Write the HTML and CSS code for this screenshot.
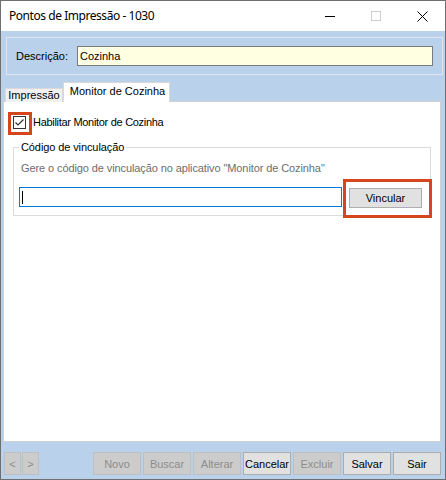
FILE: index.html
```html
<!DOCTYPE html>
<html lang="pt-BR">
<head>
<meta charset="utf-8">
<title>Pontos de Impressão - 1030</title>
<link rel="stylesheet" href="styles.css">
</head>
<body>
<div class="window">
  <div class="titlebar">
    <span class="title">Pontos de Impressão - 1030</span>
    <div class="caption">
      <span class="cap"><svg width="10" height="10" viewBox="0 0 10 10"><path d="M0 5.5H10" stroke="#000" stroke-width="1"/></svg></span>
      <span class="cap"><svg width="10" height="10" viewBox="0 0 10 10"><rect x="0.5" y="0.5" width="9" height="9" fill="none" stroke="#cccccc" stroke-width="1"/></svg></span>
      <span class="cap"><svg width="11" height="11" viewBox="0 0 11 11"><path d="M0.5 0.5L10.5 10.5M10.5 0.5L0.5 10.5" stroke="#000" stroke-width="1"/></svg></span>
    </div>
  </div>
  <div class="client">
    <div class="header-panel">
      <span class="lbl">Descrição:</span>
      <div class="desc-input">Cozinha</div>
    </div>
    <div class="tabs">
      <div class="tab">Impressão</div>
      <div class="tab active">Monitor de Cozinha</div>
    </div>
    <div class="tab-page">
      <div class="check-row">
        <span class="checkbox"><svg width="11" height="11" viewBox="0 0 11 11"><path d="M1.5 5.5L4 8L9.5 2.5" fill="none" stroke="#333" stroke-width="1.2"/></svg><span class="mark mark-check"></span></span>
        <span class="check-label">Habilitar Monitor de Cozinha</span>
      </div>
      <fieldset class="group">
        <legend>Código de vinculação</legend>
        <div class="hint">Gere o código de vinculação no aplicativo "Monitor de Cozinha"</div>
        <div class="link-row">
          <div class="code-input"><span class="caret"></span></div>
          <button class="btn link-btn">Vincular</button>
          <span class="mark mark-btn"></span>
        </div>
      </fieldset>
    </div>
    <div class="toolbar">
      <div class="nav">
        <button class="btn nav-btn" disabled>&lt;</button>
        <button class="btn nav-btn" disabled>&gt;</button>
      </div>
      <div class="actions">
        <button class="btn act" disabled>Novo</button>
        <button class="btn act" disabled>Buscar</button>
        <button class="btn act" disabled>Alterar</button>
        <button class="btn act">Cancelar</button>
        <button class="btn act" disabled>Excluir</button>
        <button class="btn act">Salvar</button>
        <button class="btn act">Sair</button>
      </div>
    </div>
  </div>
</div>
</body>
</html>
```

FILE: styles.css
```css
* { box-sizing: border-box; }
html, body { margin: 0; padding: 0; }
body {
  width: 446px;
  height: 480px;
  font-family: "Liberation Sans", Arial, sans-serif;
  font-size: 11px;
  color: #000;
  background: #fff;
}
.window {
  width: 446px;
  height: 480px;
  border: 1px solid #6f6f6f;
  display: flex;
  flex-direction: column;
}
.titlebar {
  height: 30px;
  flex: none;
  background: #fff;
  display: flex;
  align-items: center;
  justify-content: space-between;
}
.title {
  padding-left: 8px;
  font-family: "Noto Sans", "Liberation Sans", sans-serif;
  font-size: 12px;
  letter-spacing: -0.45px;
  line-height: 16px;
  margin-top: -1px;
}
.caption { display: flex; height: 30px; }
.cap {
  width: 46px;
  height: 30px;
  display: flex;
  align-items: center;
  justify-content: center;
}
.client {
  flex: 1;
  background: #b9d1ea;
  display: flex;
  flex-direction: column;
}
.header-panel {
  margin: 6px 2px 0 5px;
  height: 38px;
  border: 1px solid #dfe6ef;
  display: flex;
  align-items: center;
  padding: 0 9px 0 9px;
}
.lbl { width: 61px; line-height: 13px; }
.desc-input {
  flex: 1;
  height: 20px;
  background: #ffffe1;
  border: 1px solid #7a7a7a;
  padding-left: 2px;
  line-height: 18px;
}
.tabs {
  margin: 7px 0 0 4px;
  height: 19px;
  display: flex;
  align-items: flex-end;
  position: relative;
  z-index: 1;
}
.tab {
  height: 14px;
  width: 58px;
  background: #f0f0f0;
  border: 1px solid #d9d9d9;
  border-bottom: none;
  text-align: center;
  line-height: 13px;
  margin-bottom: -1px;
}
.tab.active {
  width: 107px;
  height: 20px;
  background: #fff;
  line-height: 16px;
  padding-left: 2px;
}
.tab-page {
  margin-left: 2px;
  width: 438px;
  height: 341px;
  background: #fff;
  border: 1px solid #d0d0d0;
  padding: 14px 0 0 9px;
}
.check-row {
  display: flex;
  align-items: center;
  height: 13px;
}
.checkbox {
  position: relative;
  width: 13px;
  height: 13px;
  border: 1px solid #333;
  background: #fff;
  display: flex;
}
.check-label { margin-left: 7px; line-height: 13px; letter-spacing: -0.3px; }
.mark {
  position: absolute;
  border: 3px solid #d5461c;
}
.mark-check { left: -6px; top: -5px; width: 24px; height: 23px; }
.group {
  margin: 12px 0 0 0;
  width: 418px;
  border: 1px solid #dcdcdc;
  padding: 0 8px 7px 5px;
}
.group legend {
  padding: 0 2px;
  line-height: 13px;
  letter-spacing: -0.1px;
}
.hint {
  color: #6d6d6d;
  margin: 8px 0 0 2px;
  line-height: 13px;
  letter-spacing: -0.1px;
}
.link-row {
  position: relative;
  display: flex;
  align-items: flex-start;
  margin-top: 12px;
}
.code-input {
  width: 323px;
  height: 20px;
  border: 1px solid #0078d7;
  position: relative;
}
.caret {
  position: absolute;
  left: 2px;
  top: 3px;
  width: 1px;
  height: 13px;
  background: #000;
}
.btn {
  font-family: "Liberation Sans", Arial, sans-serif;
  font-size: 11px;
  color: #000;
  background: #e1e1e1;
  border: 1px solid #adadad;
  padding: 0;
  margin: 0;
}
.btn:disabled {
  background: #cccccc;
  border-color: #bfbfbf;
  color: #8d8d8d;
}
.link-btn {
  margin: 1px 0 0 7px;
  width: 73px;
  height: 20px;
}
.mark-btn { left: 324px; top: -8px; width: 89px; height: 39px; }
.toolbar {
  flex: 1;
  display: flex;
  justify-content: space-between;
  align-items: flex-start;
  padding: 10px 4px 0 3px;
}
.nav { display: flex; gap: 1px; }
.nav-btn { width: 17px; height: 23px; color: #7d7d7d; }
.actions { display: flex; gap: 2px; }
.act { width: 48px; height: 23px; }
```
